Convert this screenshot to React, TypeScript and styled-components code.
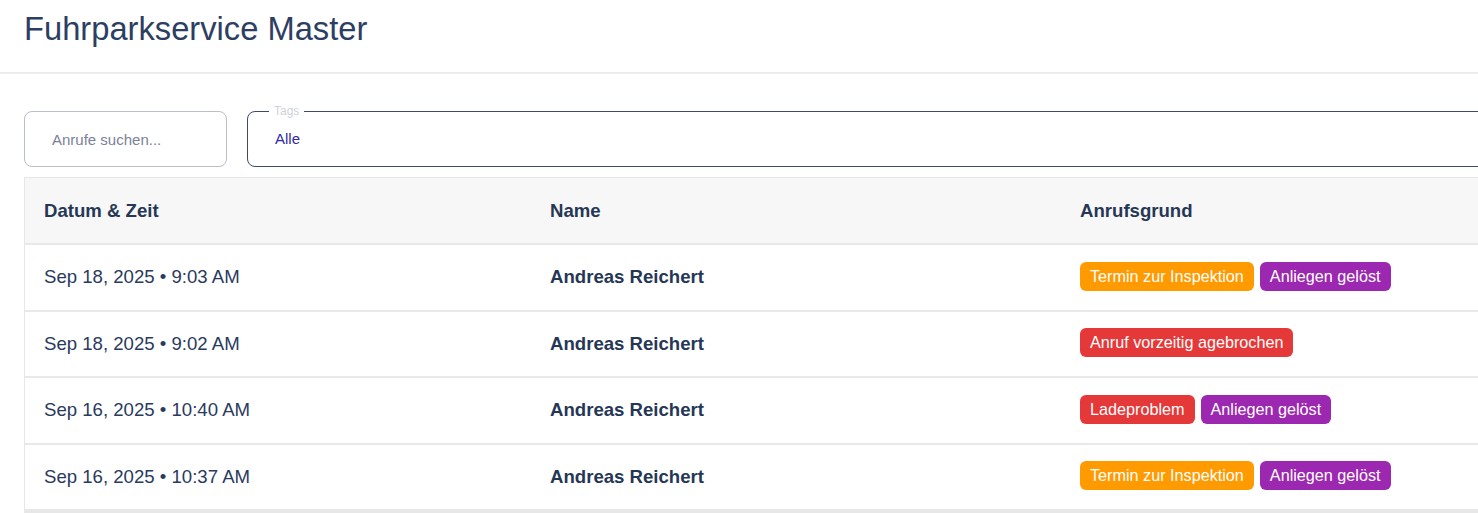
import React from "react";
import styled, { createGlobalStyle } from "styled-components";

const Global = createGlobalStyle`
  html, body { margin: 0; padding: 0; background: #fff; overflow: hidden; }
  body { font-family: "Liberation Sans", Arial, Helvetica, sans-serif; color: #2a3a5e; }
  * { box-sizing: border-box; }
`;

const Page = styled.div`
  width: 1620px;
`;

const Header = styled.header`
  height: 74px;
  padding: 10px 24px 0;
  border-bottom: 2px solid #ececec;
`;

const Title = styled.h1`
  margin: 0;
  font-size: 32.7px;
  font-weight: 300;
  line-height: 38px;
  color: #2d3e63;
`;

const Main = styled.main`
  padding: 37px 0 0 24px;
`;

const Filters = styled.div`
  display: flex;
  gap: 20px;
  align-items: flex-end;
`;

const Search = styled.input`
  width: 203px;
  height: 56px;
  border: 1px solid #b9bdcc;
  border-radius: 8px;
  padding: 0 0 0 27px;
  font-family: inherit;
  font-size: 15px;
  color: #2a3a5e;
  outline: none;
  &::placeholder { color: #7b8199; }
`;

const TagField = styled.fieldset`
  flex: 1;
  height: 62px;
  margin: -6px 0 0 0;
  padding: 0 0 0 27px;
  border: 1.5px solid #3e4a6a;
  border-radius: 8px;
  display: flex;
  align-items: center;
`;

const TagLegend = styled.legend`
  font-size: 12px;
  color: #d0d2da;
  padding: 0 5px;
  margin-left: -6px;
  line-height: 12px;
`;

const TagValue = styled.span`
  font-size: 15px;
  color: #2f2aa3;
  margin-top: -7px;
`;

const Table = styled.div`
  margin-top: 10px;
  border: 1px solid #e7e7e7;
  border-bottom: 4px solid #e7e7e7;
`;

const Row = styled.div<{ $head?: boolean }>`
  display: grid;
  grid-template-columns: 505px 530px 1fr;
  height: ${(p) => (p.$head ? "65px" : "66.5px")};
  background: ${(p) => (p.$head ? "#f7f7f7" : "#fff")};
  & + & { border-top: 2px solid #e9e9e9; }
`;

const Cell = styled.div<{ $head?: boolean; $bold?: boolean }>`
  display: flex;
  align-items: center;
  gap: 6px;
  padding-left: 19px;
  font-size: 18.6px;
  font-weight: ${(p) => (p.$head || p.$bold ? 700 : 400)};
  color: ${(p) => (p.$head || p.$bold ? "#263756" : "#2a3a5e")};
  & + & { border-left: 1px solid ${(p) => (p.$head ? "#ededed" : "transparent")}; }
`;

const Chip = styled.span<{ $color: string }>`
  display: inline-flex;
  align-items: center;
  height: 29px;
  padding: 0 10px;
  border-radius: 6px;
  background: ${(p) => p.$color};
  color: #fff;
  font-size: 16.2px;
  margin-top: -2px;
`;

const COLORS: Record<string, string> = {
  "Termin zur Inspektion": "#ff9a00",
  "Anliegen gelöst": "#9c27b0",
  "Anruf vorzeitig agebrochen": "#e53838",
  Ladeproblem: "#e53838",
};

const rows = [
  { date: "Sep 18, 2025 • 9:03 AM", name: "Andreas Reichert", tags: ["Termin zur Inspektion", "Anliegen gelöst"] },
  { date: "Sep 18, 2025 • 9:02 AM", name: "Andreas Reichert", tags: ["Anruf vorzeitig agebrochen"] },
  { date: "Sep 16, 2025 • 10:40 AM", name: "Andreas Reichert", tags: ["Ladeproblem", "Anliegen gelöst"] },
  { date: "Sep 16, 2025 • 10:37 AM", name: "Andreas Reichert", tags: ["Termin zur Inspektion", "Anliegen gelöst"] },
];

export default function App() {
  return (
    <Page>
      <Global />
      <Header>
        <Title>Fuhrparkservice Master</Title>
      </Header>
      <Main>
        <Filters>
          <Search placeholder="Anrufe suchen..." />
          <TagField>
            <TagLegend>Tags</TagLegend>
            <TagValue>Alle</TagValue>
          </TagField>
        </Filters>
        <Table>
          <Row $head>
            <Cell $head>Datum &amp; Zeit</Cell>
            <Cell $head>Name</Cell>
            <Cell $head>Anrufsgrund</Cell>
          </Row>
          {rows.map((r, i) => (
            <Row key={i}>
              <Cell>{r.date}</Cell>
              <Cell $bold>{r.name}</Cell>
              <Cell>
                {r.tags.map((t) => (
                  <Chip key={t} $color={COLORS[t]}>{t}</Chip>
                ))}
              </Cell>
            </Row>
          ))}
        </Table>
      </Main>
    </Page>
  );
}
